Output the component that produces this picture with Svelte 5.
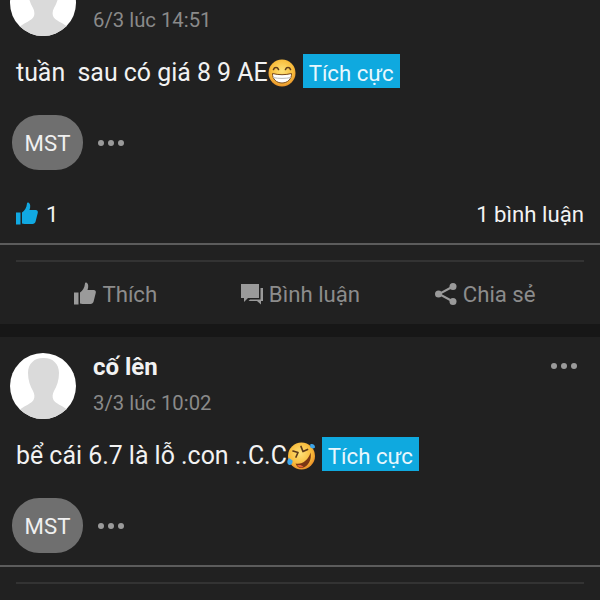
<script lang="ts">
    const posts = [
        { name: "", time: "6/3 lúc 14:51", text: "tuần\u00a0 sau có giá 8 9 AE", emoji: "grin", likes: 1, comments: 1, actions: true },
        { name: "cố lên", time: "3/3 lúc 10:02", text: "bể cái 6.7 là lỗ .con ..C.C", emoji: "rofl", likes: 0, comments: 0, actions: false },
    ];
</script>

{#snippet thumb(color: string)}
    <svg class="ico" width="24" height="24" viewBox="0 0 24 24" fill={color} aria-hidden="true">
        <rect x="1" y="10.5" width="4.5" height="12" />
        <path d="M7 21.5V10.6c2.6-1.7 4.6-4.8 5-9.1.1-.8 1-1.2 1.7-.8 1.7 1 2.1 3.8.8 7.3h6.2c1.5 0 2.5 1.4 2.1 2.8l-2.2 8.7c-.4 1.4-1.5 2.4-3 2.4H9.5c-1 0-1.9-.2-2.5-.4z" />
    </svg>
{/snippet}

<main class="feed">
    {#each posts as post}
        <article class="post">
            <header class="head">
                <svg class="avatar" viewBox="0 0 66 66" aria-hidden="true">
                    <circle cx="33" cy="33" r="33" fill="#fff" />
                    <clipPath id="round"><circle cx="33" cy="33" r="33" /></clipPath>
                    <g clip-path="url(#round)" fill="#dadada">
                        <path d="M33 5c-9 0-15 6-15 15 0 7 2 13 5 18 1.500 3 2 6 .5 9-2 3.500-9 6-13 9-2 1.500-3 4-3 10h52c0-6-1-8.500-3-10-4-3-11-5.500-13-9-1.500-3-1-6 .5-9 3-5 5-11 5-18 0-9-6-15-15-15z" />
                    </g>
                </svg>
                <div class="who">
                    <strong>{post.name}</strong>
                    <time>{post.time}</time>
                </div>
                <span class="more top"><i></i><i></i><i></i></span>
            </header>

            <p class="body">
                <span class="copy">{post.text}</span>
                {#if post.emoji === "grin"}
                    <svg class="emoji" viewBox="0 0 28 28" aria-hidden="true">
                        <defs>
                            <radialGradient id="face" cx="50%" cy="42%" r="58%">
                                <stop offset="0" stop-color="#fde27a" />
                                <stop offset="0.7" stop-color="#f8bd3c" />
                                <stop offset="1" stop-color="#e8922a" />
                            </radialGradient>
                        </defs>
                        <circle cx="14" cy="14" r="13.5" fill="url(#face)" />
                        <path d="M5.500 10.500c1-2.600 4-2.600 5 0M17.500 10.500c1-2.600 4-2.600 5 0" fill="none" stroke="#5d3a1a" stroke-width="1.600" stroke-linecap="round" />
                        <path d="M4.500 14.500c6 1.600 13 1.600 19 0 .3 5.500-4 9.500-9.500 9.500s-9.800-4-9.500-9.500z" fill="#fff" stroke="#7a4a1c" stroke-width="1" />
                        <path d="M5 18.500c5.500 1.200 12.500 1.200 18 0" fill="none" stroke="#b9b9b9" stroke-width="1" />
                    </svg>
                {:else}
                    <svg class="emoji" viewBox="0 0 28 28" aria-hidden="true">
                        <defs>
                            <radialGradient id="face2" cx="45%" cy="40%" r="62%">
                                <stop offset="0" stop-color="#fde27a" />
                                <stop offset="0.7" stop-color="#f8b938" />
                                <stop offset="1" stop-color="#e88a26" />
                            </radialGradient>
                        </defs>
                        <circle cx="14.500" cy="14" r="13.500" fill="url(#face2)" />
                        <path d="M6 9l5 1.500-2 4.500M14 4.500l2 5 4.500-2" fill="none" stroke="#5d3a1a" stroke-width="1.700" stroke-linecap="round" stroke-linejoin="round" />
                        <path d="M8.500 21.500c6.500 1.500 13-3.500 15-11 1.500 7-2 14-8.500 15.500-3 .500-5.500-1.500-6.500-4.500z" fill="#7a3614" />
                        <path d="M10 23.500c2.500-1 4.500-.500 6.500 1.500-2.500 1-4.500 .500-6.500-1.500z" fill="#e8663a" />
                        <path d="M2 16c-2 2.500-2.500 5.500 0 7 2.500 .500 4-2 3.500-4.500zM23.500 2c3-.500 4.500 1 4.500 3.500-1.500 1.500-3.500 1-5-.500z" fill="#3da5e8" />
                    </svg>
                {/if}
                <span class="tag">Tích cực</span>
            </p>

            <div class="symbols">
                <span class="chip">MST</span>
                <span class="more"><i></i><i></i><i></i></span>
            </div>

            {#if post.likes}
                <div class="stats">
                    <span class="likes">{@render thumb("#11a9e2")} {post.likes}</span>
                    <span>{post.comments} bình luận</span>
                </div>
            {/if}

            <div class="rule"></div>

            <div class="actions-wrap">
                <div class="actions">
                    {#if post.actions}
                        <button>{@render thumb("#9a9a9a")} Thích</button>
                        <button>
                            <svg class="ico" width="24" height="24" viewBox="0 0 24 24" fill="#9a9a9a" aria-hidden="true">
                                <path d="M1 2h18v14H8l-4 4v-4H1z" />
                                <path d="M20.500 6H23v13h-2v3.500L17 19H8.500l1.500-1.600h10.500z" />
                            </svg>
                            Bình luận
                        </button>
                        <button>
                            <svg class="ico" width="24" height="24" viewBox="0 0 24 24" aria-hidden="true">
                                <path d="M19 4.500 5 12l14 7.500" fill="none" stroke="#9a9a9a" stroke-width="2" />
                                <circle cx="19" cy="4.500" r="3.500" fill="#9a9a9a" />
                                <circle cx="4.500" cy="12" r="3.500" fill="#9a9a9a" />
                                <circle cx="19" cy="19.500" r="3.500" fill="#9a9a9a" />
                            </svg>
                            Chia sẻ
                        </button>
                    {/if}
                </div>
            </div>
        </article>
    {/each}
</main>

<style>
    :global(body) {
        margin: 0;
        background: #212121;
        overflow: hidden;
    }

    .feed {
        height: 600px;
        overflow: hidden;
        font-family: Roboto, "Liberation Sans", sans-serif;
        color: #f2f2f2;
    }

    .post {
        background: #212121;
        border-bottom: 13px solid #171717;
    }

    .post:first-child {
        margin-top: -46px;
    }

    .head {
        position: relative;
        display: flex;
        gap: 17px;
        padding: 16px 10px 0;
    }

    .avatar {
        width: 66px;
        height: 66px;
        flex-shrink: 0;
    }

    .who {
        display: flex;
        flex-direction: column;
        gap: 9px;
    }

    .who strong {
        height: 28px;
        font-size: 24px;
        line-height: 28px;
        font-weight: 700;
    }

    .who time {
        margin-top: 1px;
        font-size: 20.300px;
        line-height: 24px;
        color: #8a8a8a;
    }

    .more {
        display: inline-flex;
        gap: 4px;
    }

    .more i {
        width: 6px;
        height: 6px;
        border-radius: 50%;
        background: #9a9a9a;
    }

    .more.top {
        position: absolute;
        right: 23px;
        top: 26px;
    }

    .body {
        display: flex;
        align-items: center;
        margin: 18px 0 0 16px;
        height: 34px;
        font-size: 24.900px;
        line-height: 34px;
        white-space: pre;
    }

    .copy {
        padding-top: 3px;
    }

    .emoji {
        width: 28px;
        height: 28px;
        margin-top: 3px;
        flex-shrink: 0;
    }

    .tag {
        margin-left: 7px;
        padding: 2px 6px 0;
        height: 34px;
        box-sizing: border-box;
        background: #0fa9df;
        color: #e8f7fd;
        font-size: 22.200px;
    }

    .symbols {
        display: flex;
        align-items: center;
        gap: 15px;
        margin: 27px 0 0 12px;
    }

    .chip {
        display: grid;
        place-items: center;
        width: 71px;
        height: 55px;
        border-radius: 27px;
        background: #6f6f6f;
        font-size: 22.200px;
        color: #f0f0f0;
    }

    .stats {
        display: flex;
        justify-content: space-between;
        align-items: center;
        height: 30px;
        margin-top: 29px;
        padding: 0 16px 0 15px;
        font-size: 22.200px;
    }

    .likes {
        display: flex;
        align-items: center;
        gap: 7px;
    }

    .rule {
        height: 2px;
        margin-top: 12px;
        background: #5c5c5c;
    }

    .stats + .rule {
        margin-top: 14px;
    }

    .actions-wrap {
        padding: 15px 16px 0;
    }

    .actions {
        display: grid;
        grid-template-columns: repeat(3, 1fr);
        height: 62px;
        padding: 0 7px;
        border-top: 2px solid #333;
    }

    .actions button {
        display: flex;
        align-items: center;
        justify-content: center;
        gap: 5px;
        border: 0;
        padding: 2px 0 0;
        background: none;
        font: inherit;
        font-size: 22.200px;
        color: #8c8c8c;
    }

    .ico {
        flex-shrink: 0;
    }
</style>
